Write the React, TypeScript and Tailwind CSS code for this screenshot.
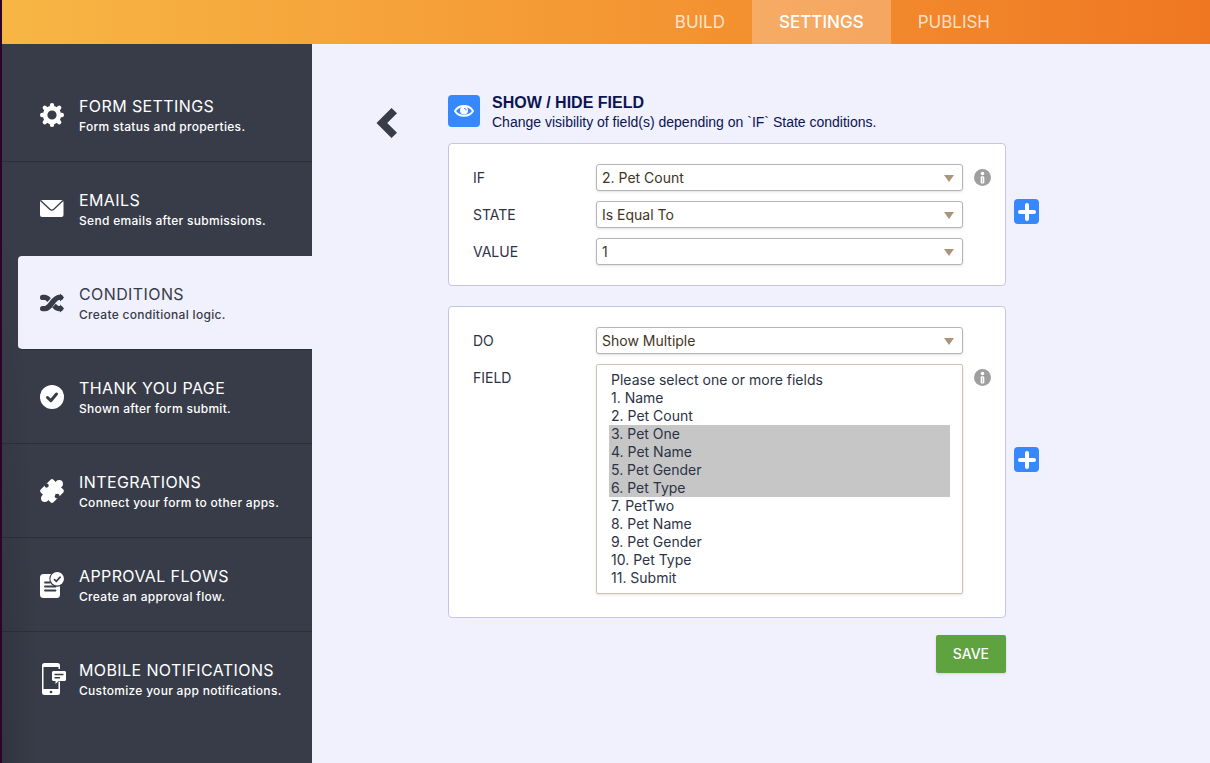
import { useState } from 'react';
import type { ReactNode } from 'react';
import clsx from 'clsx';

const GearIcon = () => (
  <svg width="24" height="24" viewBox="0 0 24 24" fill="none" stroke="currentColor">
    <circle cx="12" cy="12" r="6.9" strokeWidth="4.6" />
    <g strokeWidth="4.4" strokeLinecap="round">
      <path d="M12 2.2v2M12 19.8v2M2.2 12h2M19.8 12h2M4.8 4.8l1.6 1.6M17.6 17.6l1.6 1.6M4.8 19.2l1.6-1.6M17.6 6.4l1.6-1.6" />
    </g>
  </svg>
);

const MailIcon = () => (
  <svg width="24" height="24" viewBox="0 0 24 24">
    <rect x="0" y="3" width="23.5" height="17" rx="2" fill="currentColor" />
    <path d="M0.5 3.5l9.3 8.8a3 3 0 0 0 4 0l9.2-8.8" fill="none" stroke="#373c48" strokeWidth="1.3" />
  </svg>
);

const ShuffleIcon = () => (
  <svg width="24" height="24" viewBox="0 0 24 24" fill="none" stroke="currentColor">
    <path d="M2.7 6.4H5c4.5 0 8.5 11.2 14 11.2h1.5" strokeWidth="5.4" strokeLinecap="round" />
    <path d="M7.5 16.2C10.5 13.5 13 9.5 16.5 7.6" stroke="#f1f0fd" strokeWidth="7.4" />
    <path d="M2.7 17.6H5c5.5 0 8.5-11.2 14-11.2h1.5" strokeWidth="5.4" strokeLinecap="round" />
    <path d="M20 2.4v8l4-4zM20 13.6v8l4-4z" fill="currentColor" stroke="none" />
  </svg>
);

const CheckCircleIcon = () => (
  <svg width="24" height="24" viewBox="0 0 24 24">
    <circle cx="12" cy="12" r="12" fill="currentColor" />
    <path d="M7.5 12.5l3.3 3.2 5.7-6.7" fill="none" stroke="#373c48" strokeWidth="3" strokeLinecap="round" strokeLinejoin="round" />
  </svg>
);

const PuzzleIcon = () => (
  <svg width="24" height="24" viewBox="0 0 24 24" fill="currentColor">
    <rect x="3" y="3" width="18" height="18" rx="2.4" transform="rotate(45 12 12)" />
    <circle cx="19.2" cy="4.8" r="3.8" />
    <circle cx="4.8" cy="19.2" r="3.8" />
    <circle cx="6.6" cy="6.6" r="2.1" fill="#373c48" />
    <circle cx="17.2" cy="17.2" r="2.4" fill="#373c48" />
  </svg>
);

const ApprovalIcon = () => (
  <svg width="24" height="28" viewBox="0 0 24 28">
    <rect x="0" y="3" width="20" height="24" rx="3.5" fill="currentColor" />
    <path d="M5 11.5h5M5 15.5h10.5M5 19.5h10.5" stroke="#373c48" strokeWidth="1.8" strokeLinecap="round" />
    <circle cx="17.2" cy="7.8" r="7.9" fill="#373c48" />
    <circle cx="17.2" cy="7.8" r="6.8" fill="currentColor" />
    <path d="M14 8.2l2.3 2.2 4.3-4.8" fill="none" stroke="#373c48" strokeWidth="1.6" />
  </svg>
);

const MobileIcon = () => (
  <svg width="28" height="32" viewBox="-4 0 28 32">
    <rect x="0" y="0" width="18" height="32" rx="2.5" fill="currentColor" />
    <path d="M1.5 4h15v22h-15z" fill="#373c48" />
    <circle cx="9" cy="29" r="1.3" fill="#373c48" />
    <path d="M16 6h4v12.5h-4z" fill="#373c48" />
    <path d="M11.5 8h11c.8 0 1.5.7 1.5 1.5v7c0 .8-.7 1.5-1.5 1.5h-6L13.5 21v-3h-2c-.8 0-1.5-.7-1.5-1.5v-7c0-.8.7-1.5 1.5-1.5z" fill="currentColor" />
    <path d="M12.5 11.5h9M12.5 14.7h5.5" stroke="#373c48" strokeWidth="1.5" />
  </svg>
);

const InfoIcon = () => (
  <svg width="17" height="17" viewBox="0 0 17 17">
    <circle cx="8.5" cy="8.5" r="8.5" fill="#9f9f9f" />
    <circle cx="8.5" cy="4.5" r="1.8" fill="#fff" />
    <rect x="6.7" y="7.2" width="3.6" height="7.3" rx="1.2" fill="#fff" />
    <path d="M8.5 8.5v5" stroke="#9f9f9f" strokeWidth="0.6" />
  </svg>
);

interface MenuItem {
  title: string;
  description: string;
  icon: ReactNode;
  active?: boolean;
  divider?: boolean;
}

const menuItems: MenuItem[] = [
  { title: 'FORM SETTINGS', description: 'Form status and properties.', icon: <GearIcon />, divider: true },
  { title: 'EMAILS', description: 'Send emails after submissions.', icon: <MailIcon /> },
  { title: 'CONDITIONS', description: 'Create conditional logic.', icon: <ShuffleIcon />, active: true },
  { title: 'THANK YOU PAGE', description: 'Shown after form submit.', icon: <CheckCircleIcon />, divider: true },
  { title: 'INTEGRATIONS', description: 'Connect your form to other apps.', icon: <PuzzleIcon />, divider: true },
  { title: 'APPROVAL FLOWS', description: 'Create an approval flow.', icon: <ApprovalIcon />, divider: true },
  { title: 'MOBILE NOTIFICATIONS', description: 'Customize your app notifications.', icon: <MobileIcon /> },
];

const fields = [
  'Please select one or more fields',
  '1. Name',
  '2. Pet Count',
  '3. Pet One',
  '4. Pet Name',
  '5. Pet Gender',
  '6. Pet Type',
  '7. PetTwo',
  '8. Pet Name',
  '9. Pet Gender',
  '10. Pet Type',
  '11. Submit',
];

const Sidebar = () => (
  <aside className="relative w-[310px] shrink-0 bg-[#373c48] pt-6">
    <nav>
      {menuItems.map((item) => (
        <a
          key={item.title}
          href="#"
          className={clsx(
            'flex h-[94px] items-center border-b',
            item.active
              ? 'ml-4 rounded-l border-[#2b303b] bg-[#f1f0fd] bg-clip-padding pl-5 text-[#373c48]'
              : 'pl-9 text-white',
            !item.active && (item.divider ? 'border-[#2b303b]' : 'border-transparent')
          )}
        >
          <span className="flex w-7 shrink-0 justify-center">{item.icon}</span>
          <span className="ml-[13px] flex flex-col gap-px pt-1">
            <span className="text-base leading-5 tracking-wide">{item.title}</span>
            <span className="text-xs font-medium leading-5 tracking-wide">{item.description}</span>
          </span>
        </a>
      ))}
    </nav>
    <div className="pointer-events-none absolute bottom-0 left-0 top-32 w-9 bg-[radial-gradient(ellipse_36px_560px_at_0_100%,rgba(0,0,0,0.12),transparent)]" />
  </aside>
);

interface SelectRowProps {
  id: string;
  label: string;
  value: string;
  info?: boolean;
}

const SelectRow = ({ id, label, value, info }: SelectRowProps) => (
  <div className="grid grid-cols-[112px_1fr_17px] items-center gap-x-[11px]">
    <label htmlFor={id} className="text-sm text-[#2c3345]">{label}</label>
    <div className="relative">
      <select
        id={id}
        defaultValue={value}
        className="block h-[27px] w-full appearance-none rounded-[3px] border border-[#b5b5b5] bg-white px-[5px] text-sm text-[#42351f] shadow-sm"
      >
        <option>{value}</option>
      </select>
      <svg className="pointer-events-none absolute right-[9px] top-[11px]" width="10" height="7" viewBox="0 0 10 7">
        <path d="M0 0h10L5 7z" fill="#a8957a" />
      </svg>
    </div>
    {info && <InfoIcon />}
  </div>
);

const Panel = ({ children }: { children: ReactNode }) => (
  <div className="flex items-center gap-2">
    <section className="flex min-w-0 flex-1 flex-col gap-2.5 rounded border border-[#c4c5e8] bg-white py-5 pl-6 pr-3.5">
      {children}
    </section>
    <button type="button" aria-label="Add" className="mb-1.5 shrink-0">
      <svg width="25" height="25" viewBox="0 0 25 25">
        <rect width="25" height="25" rx="4" fill="#3588fd" />
        <path d="M13 6v14M6 13h14" stroke="#fff" strokeWidth="4" strokeLinecap="round" />
      </svg>
    </button>
  </div>
);

export default function App() {
  const [selected, setSelected] = useState<string[]>(fields.slice(3, 7));

  return (
    <div className="flex min-h-screen flex-col border-l-2 border-[#2e0229] bg-[#f1f0fd] font-['Inter',sans-serif]">
      <header className="flex h-11 justify-end bg-gradient-to-r from-[#f7b644] to-[#ef7722] pr-[193px] text-[17px] text-white/75">
        <a href="#" className="flex items-center px-[27px] pt-0.5">BUILD</a>
        <a href="#" className="flex items-center bg-white/25 px-[27px] pt-0.5 font-medium text-white">SETTINGS</a>
        <a href="#" className="flex items-center px-[27px] pt-0.5">PUBLISH</a>
      </header>

      <div className="flex flex-1">
        <Sidebar />

        <main className="flex min-w-0 flex-1 items-start pl-16 pr-10 pt-[51px]">
          <button type="button" aria-label="Back" className="mr-[51px] mt-[13px] shrink-0">
            <svg width="21" height="30" viewBox="0 0 21 30">
              <path d="M15.5 0L21 5.2 11.2 15 21 24.8 15.5 30 0.5 15z" fill="#373c48" />
            </svg>
          </button>

          <div className="max-w-[591px] flex-1">
            <div className="mb-2.5 flex items-start gap-3 font-['Liberation_Sans',sans-serif] text-[#0a1551]">
              <span className="flex size-8 shrink-0 items-center justify-center rounded bg-[#3588fd]">
                <svg width="20" height="14" viewBox="0 0 20 14" fill="none" stroke="#fff">
                  <path d="M1 7c2-3.4 5.2-5 9-5s7 1.6 9 5c-2 3.3-5.2 4.8-9 4.8S3 10.3 1 7z" strokeWidth="1.9" />
                  <circle cx="10" cy="6.5" r="4" fill="#fff" stroke="none" />
                  <path d="M10.2 4.4a2 2 0 0 1 2 2" stroke="#3588fd" strokeWidth="1" />
                </svg>
              </span>
              <div>
                <h1 className="text-base font-bold leading-4">SHOW / HIDE FIELD</h1>
                <p className="text-sm leading-[22px]">Change visibility of field(s) depending on `IF` State conditions.</p>
              </div>
            </div>

            <div className="flex flex-col gap-5">
              <Panel>
                <SelectRow id="if" label="IF" value="2. Pet Count" info />
                <SelectRow id="state" label="STATE" value="Is Equal To" />
                <SelectRow id="value" label="VALUE" value="1" />
              </Panel>

              <Panel>
                <SelectRow id="do" label="DO" value="Show Multiple" />
                <div className="mb-[3px] grid grid-cols-[112px_1fr_17px] items-start gap-x-[11px]">
                  <label htmlFor="field" className="pt-1 text-sm text-[#2c3345]">FIELD</label>
                  <select
                    id="field"
                    multiple
                    size={12}
                    value={selected}
                    onChange={(e) => setSelected(Array.from(e.target.selectedOptions, (o) => o.value))}
                    className="block h-[230px] w-full overflow-hidden rounded-xs border border-[#cfc3b1] bg-white px-3 py-1.5 text-sm text-[#2c3345] shadow-sm"
                  >
                    {fields.map((field) => (
                      <option
                        key={field}
                        className="h-[18px] min-h-0 px-0.5 py-0 leading-[18px] text-[#2c3345] checked:bg-[linear-gradient(#c6c6c6,#c6c6c6)]"
                      >
                        {field}
                      </option>
                    ))}
                  </select>
                  <span className="pt-[5px]"><InfoIcon /></span>
                </div>
              </Panel>
            </div>

            <div className="mt-[17px] flex justify-end pr-[33px]">
              <button type="button" className="h-[38px] rounded-xs bg-[#5fa341] px-[17px] text-sm font-medium text-white shadow-sm">
                SAVE
              </button>
            </div>
          </div>
        </main>
      </div>
    </div>
  );
}
